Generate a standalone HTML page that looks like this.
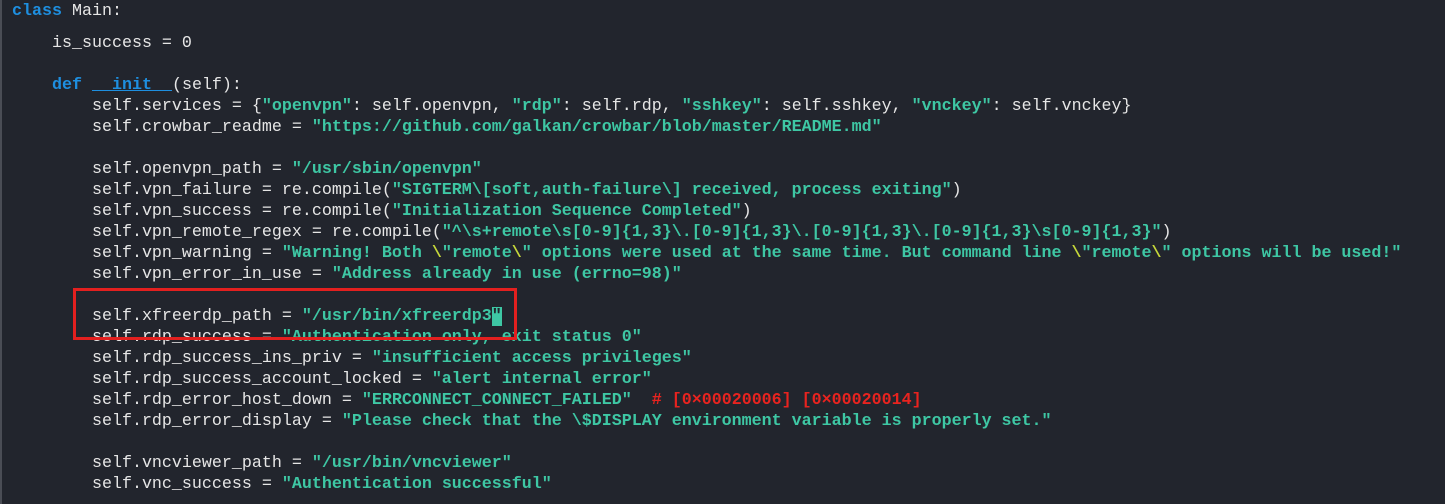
<!DOCTYPE html>
<html><head><meta charset="utf-8"><style>
html,body{margin:0;padding:0;}
body{width:1445px;height:504px;overflow:hidden;background:#22252d;position:relative;font-family:"Liberation Mono",monospace;font-size:16.67px;color:#e6e6e6;}
.l{position:absolute;left:12px;white-space:pre;line-height:21px;height:21px;}
.k{color:#1e8fe0;font-weight:bold;}
.f{color:#1e8fe0;font-weight:bold;text-decoration:underline;}
.s{color:#3ec7a4;font-weight:bold;}
.e{color:#c6d83a;font-weight:bold;}
.c{color:#e8231f;font-weight:bold;}
.bar{position:absolute;left:0;top:0;width:2px;height:504px;background:#4a4d55;}
.box{position:absolute;left:73px;top:288px;width:438px;height:46px;border:3px solid #e3201f;}
.cur{background:#3ec7a4;color:#22252d;}
</style></head><body>
<div class="bar"></div>
<div class="l" style="top:1px"><span class="k">class</span> Main:</div>
<div class="l" style="top:33px">    is_success = 0</div>
<div class="l" style="top:75px">    <span class="k">def</span> <span class="f">__init__</span>(self):</div>
<div class="l" style="top:96px">        self.services = {<span class="s">"openvpn"</span>: self.openvpn, <span class="s">"rdp"</span>: self.rdp, <span class="s">"sshkey"</span>: self.sshkey, <span class="s">"vnckey"</span>: self.vnckey}</div>
<div class="l" style="top:117px">        self.crowbar_readme = <span class="s">"https://github.com/galkan/crowbar/blob/master/README.md"</span></div>
<div class="l" style="top:159px">        self.openvpn_path = <span class="s">"/usr/sbin/openvpn"</span></div>
<div class="l" style="top:180px">        self.vpn_failure = re.compile(<span class="s">"SIGTERM\[soft,auth-failure\] received, process exiting"</span>)</div>
<div class="l" style="top:201px">        self.vpn_success = re.compile(<span class="s">"Initialization Sequence Completed"</span>)</div>
<div class="l" style="top:222px">        self.vpn_remote_regex = re.compile(<span class="s">"^\s+remote\s[0-9]{1,3}\.[0-9]{1,3}\.[0-9]{1,3}\.[0-9]{1,3}\s[0-9]{1,3}"</span>)</div>
<div class="l" style="top:243px">        self.vpn_warning = <span class="s">"Warning! Both <span class="e">\</span>"remote<span class="e">\</span>" options were used at the same time. But command line <span class="e">\</span>"remote<span class="e">\</span>" options will be used!"</span></div>
<div class="l" style="top:264px">        self.vpn_error_in_use = <span class="s">"Address already in use (errno=98)"</span></div>
<div class="l" style="top:306px">        self.xfreerdp_path = <span class="s">"/usr/bin/xfreerdp3<span class="cur">"</span></span></div>
<div class="l" style="top:327px">        self.rdp_success = <span class="s">"Authentication only, exit status 0"</span></div>
<div class="l" style="top:348px">        self.rdp_success_ins_priv = <span class="s">"insufficient access privileges"</span></div>
<div class="l" style="top:369px">        self.rdp_success_account_locked = <span class="s">"alert internal error"</span></div>
<div class="l" style="top:390px">        self.rdp_error_host_down = <span class="s">"ERRCONNECT_CONNECT_FAILED"</span>  <span class="c"># [0×00020006] [0×00020014]</span></div>
<div class="l" style="top:411px">        self.rdp_error_display = <span class="s">"Please check that the \$DISPLAY environment variable is properly set."</span></div>
<div class="l" style="top:453px">        self.vncviewer_path = <span class="s">"/usr/bin/vncviewer"</span></div>
<div class="l" style="top:474px">        self.vnc_success = <span class="s">"Authentication successful"</span></div>
<div class="box"></div>
</body></html>
